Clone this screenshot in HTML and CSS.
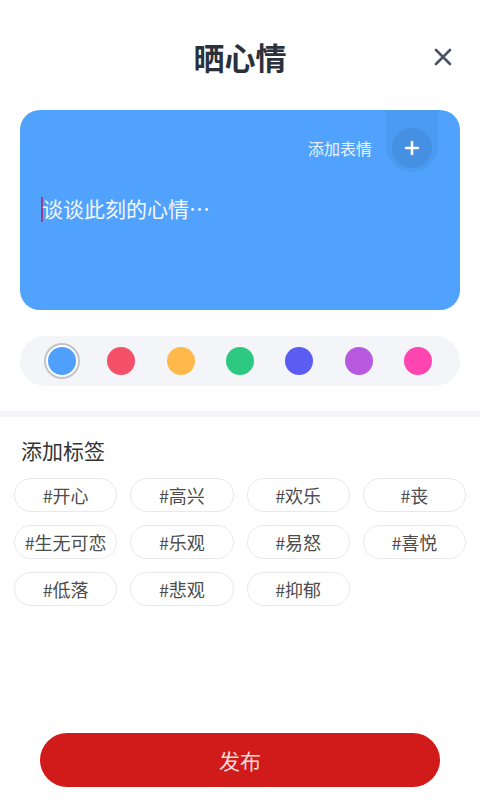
FILE: index.html
```html
<!DOCTYPE html>
<html lang="zh-CN">
<head>
    <meta charset="UTF-8">
    <meta name="viewport" content="width=device-width, initial-scale=1.0">
    <title>晒心情</title>
    <link rel="stylesheet" href="styles.css">
</head>
<body>
    <div id="page">
        <div id="header">
            <h1>晒心情</h1>
            <button id="close-button" aria-label="关闭">
                <svg width="24" height="24" viewBox="0 0 24 24">
                    <path d="M5 5 L19 19 M19 5 L5 19" stroke="#4c5266" stroke-width="2.6" stroke-linecap="round" fill="none"/>
                </svg>
            </button>
        </div>

        <div id="mood-card">
            <div class="tab"></div>
            <div class="card-top">
                <span class="add-emoji">添加表情</span>
                <button class="plus-button" aria-label="添加表情">
                    <svg width="16" height="16" viewBox="0 0 16 16">
                        <path d="M8 2 V14 M2 8 H14" stroke="#fff" stroke-width="2.6" stroke-linecap="round"/>
                    </svg>
                </button>
            </div>
            <div class="placeholder"><span class="caret"></span>谈谈此刻的心情…</div>
        </div>

        <div id="colors">
            <span class="dot selected"></span>
            <span class="dot red"></span>
            <span class="dot orange"></span>
            <span class="dot green"></span>
            <span class="dot indigo"></span>
            <span class="dot purple"></span>
            <span class="dot pink"></span>
        </div>

        <div class="divider"></div>

        <h2>添加标签</h2>
        <div id="tags">
            <button class="tag">#开心</button>
            <button class="tag">#高兴</button>
            <button class="tag">#欢乐</button>
            <button class="tag">#丧</button>
            <button class="tag">#生无可恋</button>
            <button class="tag">#乐观</button>
            <button class="tag">#易怒</button>
            <button class="tag">#喜悦</button>
            <button class="tag">#低落</button>
            <button class="tag">#悲观</button>
            <button class="tag">#抑郁</button>
        </div>

        <button id="publish">发布</button>
    </div>
</body>
</html>
```

FILE: styles.css
```css
* {
    box-sizing: border-box;
}

body {
    margin: 0;
    background: #fff;
    font-family: "Noto Sans CJK SC", "Noto Sans", sans-serif;
}

button {
    font-family: inherit;
    cursor: pointer;
}

#page {
    display: flex;
    flex-direction: column;
    height: 800px;
}

#header {
    position: relative;
    padding: 36px 0 32px;
    text-align: center;
}

#header h1 {
    margin: 0;
    font-size: 31px;
    line-height: 42px;
    font-weight: 700;
    color: #2a313c;
}

#close-button {
    position: absolute;
    right: 25px;
    top: 45px;
    width: 24px;
    height: 24px;
    padding: 0;
    border: none;
    background: none;
}

#mood-card {
    position: relative;
    margin: 0 20px;
    height: 200px;
    border-radius: 20px;
    background: #50a2fd;
    overflow: hidden;
}

#mood-card .tab {
    position: absolute;
    top: 0;
    right: 22px;
    width: 52px;
    height: 62px;
    border-radius: 0 0 26px 26px;
    background: #4b9bf3;
}

.card-top {
    position: relative;
    display: flex;
    justify-content: flex-end;
    align-items: center;
    gap: 20px;
    padding: 18px 28px 0 0;
}

.add-emoji {
    font-size: 16px;
    color: #eaf3ff;
}

.plus-button {
    display: flex;
    align-items: center;
    justify-content: center;
    width: 40px;
    height: 40px;
    padding: 0;
    border: none;
    border-radius: 50%;
    background: #4690e4;
}

.placeholder {
    margin-top: 26px;
    padding-left: 21px;
    font-size: 21px;
    line-height: 28px;
    color: #f2f7ff;
}

.caret {
    display: inline-block;
    width: 2px;
    height: 25px;
    margin-right: -1px;
    vertical-align: -5px;
    background: #9b3d8d;
}

#colors {
    display: flex;
    justify-content: space-between;
    align-items: center;
    margin: 26px 20px 0;
    height: 50px;
    padding: 0 28px;
    border-radius: 25px;
    background: #f4f5f9;
}

.dot {
    width: 28px;
    height: 28px;
    border-radius: 50%;
    background: #4fa0fc;
}

.dot.selected {
    box-shadow: 0 0 0 2px #fff, 0 0 0 4px #c3c4c9;
}

.dot.red { background: #f5506a; }
.dot.orange { background: #ffb84a; }
.dot.green { background: #2ec981; }
.dot.indigo { background: #5b5cf2; }
.dot.purple { background: #b75ae0; }
.dot.pink { background: #ff46b0; }

.divider {
    margin-top: 25px;
    height: 6px;
    background: #f4f5f9;
}

h2 {
    margin: 19px 0 0 21px;
    font-size: 21px;
    line-height: 28px;
    font-weight: 400;
    color: #333;
}

#tags {
    display: grid;
    grid-template-columns: repeat(4, 1fr);
    gap: 13px;
    margin-top: 14px;
    padding: 0 14px;
}

.tag {
    height: 34px;
    padding: 0;
    border: 1.5px solid #e9e9ec;
    border-radius: 17px;
    background: #fff;
    font-size: 18px;
    color: #4d4d4d;
}

#publish {
    margin: auto 40px 13px;
    height: 54px;
    border: none;
    border-radius: 27px;
    background: #d11b1b;
    font-size: 21px;
    color: #f8dada;
}
```
